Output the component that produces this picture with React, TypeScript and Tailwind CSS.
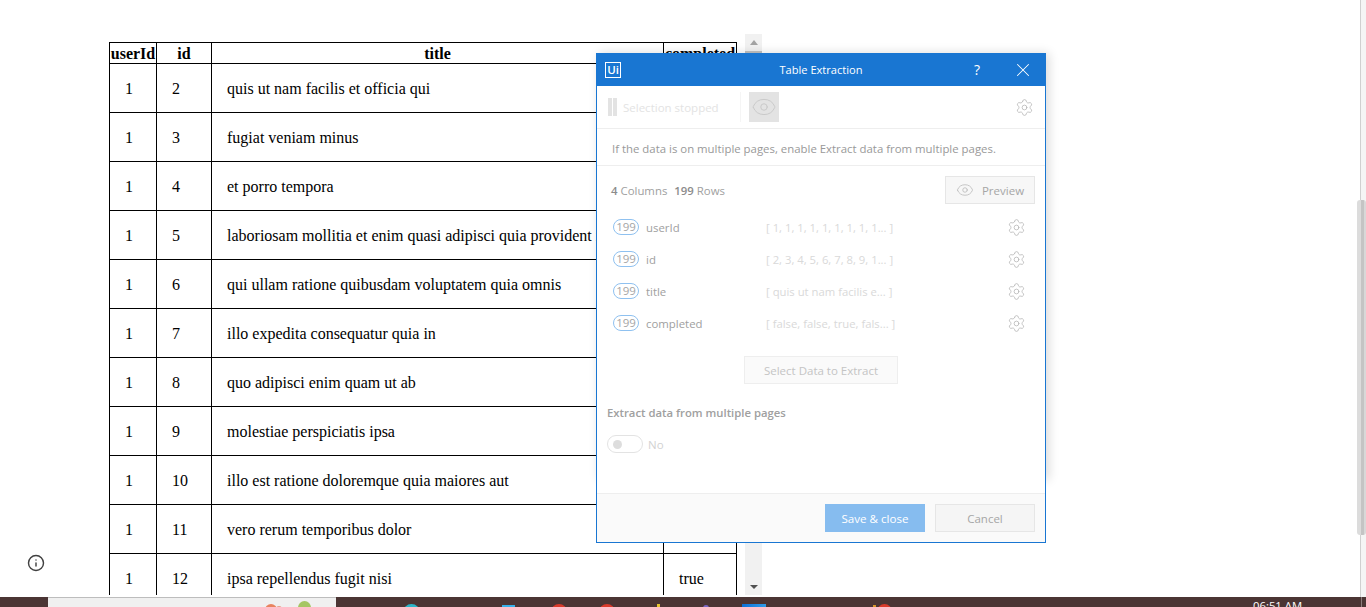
import { Settings, X, Eye, Info } from "lucide-react";

const rows = [
  { id: 2, title: "quis ut nam facilis et officia qui", done: "false" },
  { id: 3, title: "fugiat veniam minus", done: "false" },
  { id: 4, title: "et porro tempora", done: "true" },
  { id: 5, title: "laboriosam mollitia et enim quasi adipisci quia provident illum", done: "false" },
  { id: 6, title: "qui ullam ratione quibusdam voluptatem quia omnis", done: "false" },
  { id: 7, title: "illo expedita consequatur quia in", done: "false" },
  { id: 8, title: "quo adipisci enim quam ut ab", done: "true" },
  { id: 9, title: "molestiae perspiciatis ipsa", done: "false" },
  { id: 10, title: "illo est ratione doloremque quia maiores aut", done: "true" },
  { id: 11, title: "vero rerum temporibus dolor", done: "true" },
  { id: 12, title: "ipsa repellendus fugit nisi", done: "true" },
];

const columns = [
  { name: "userId", sample: "[ 1, 1, 1, 1, 1, 1, 1, 1, 1... ]" },
  { name: "id", sample: "[ 2, 3, 4, 5, 6, 7, 8, 9, 1... ]" },
  { name: "title", sample: "[ quis ut nam facilis e... ]" },
  { name: "completed", sample: "[ false, false, true, fals... ]" },
];

function DataTable() {
  return (
    <div className="absolute left-[109px] top-[42px] h-[553px] w-[628px] overflow-hidden">
      <table className="w-[628px] table-fixed border-collapse border-[1px] border-black font-['Liberation_Serif',serif] text-[16px] text-black">
        <colgroup>
          <col className="w-[47px]" />
          <col className="w-[55px]" />
          <col className="w-[452px]" />
          <col className="w-[73px]" />
        </colgroup>
        <thead>
          <tr className="h-[21px] text-[16px] leading-[18px]">
            <th className="border border-black p-0 pt-[1px] font-bold">userId</th>
            <th className="border border-black p-0 pt-[1px] font-bold">id</th>
            <th className="border border-black p-0 pt-[1px] font-bold">title</th>
            <th className="border border-black p-0 pt-[1px] font-bold">completed</th>
          </tr>
        </thead>
        <tbody>
          {rows.map((row) => (
            <tr key={row.id} className="h-[49px]">
              <td className="border border-black p-0 pl-[15px] pt-[1px]">1</td>
              <td className="border border-black p-0 pl-[15px] pt-[1px]">{row.id}</td>
              <td className="truncate border border-black p-0 pl-[15px] pt-[1px]">{row.title}</td>
              <td className="border border-black p-0 pl-[15px] pt-[1px]">{row.done}</td>
            </tr>
          ))}
        </tbody>
      </table>
    </div>
  );
}

function TableExtraction() {
  return (
    <div className="absolute left-[596px] top-[53px] flex h-[490px] w-[450px] flex-col border border-[#1976d2] bg-white font-['Open_Sans',sans-serif]">
      <div className="relative -mx-px -mt-px flex h-[33px] shrink-0 items-center justify-center bg-[#1976d2] pt-[1px] text-[11.1px] text-white">
        <div className="absolute left-[9px] top-[9px] flex h-[16px] w-[16px] items-center justify-center border border-white text-[11.5px] font-semibold leading-none">
          Ui
        </div>
        <span>Table Extraction</span>
        <span className="absolute left-[378px] top-[8px] text-[14px] leading-[18px]">?</span>
        <X className="absolute left-[416px] top-[6px] h-[22px] w-[22px]" strokeWidth={1.1} />
      </div>

      <div className="flex h-[43px] shrink-0 items-center border-b border-[#eeeeee] pl-[11px] pr-[11px]">
        <span className="h-[18px] w-[4px] bg-[#e3e3e3]" />
        <span className="ml-[1px] h-[18px] w-[4px] bg-[#e3e3e3]" />
        <span className="ml-[6px] w-[116px] pt-[2px] text-[11.5px] text-[#e3e3e3]">Selection stopped</span>
        <span className="ml-[1px] h-[30px] w-px bg-[#f5f5f5]" />
        <div className="ml-[8px] flex h-[30px] w-[30px] items-center justify-center bg-[#e3e3e3]">
          <Eye className="h-[26px] w-[26px] text-[#c9c9c9]" strokeWidth={0.9} />
        </div>
        <Settings className="ml-auto h-[19px] w-[19px] text-[#b5b5b5]" strokeWidth={1} />
      </div>

      <div className="flex h-[37px] shrink-0 items-center border-b border-[#eeeeee] pl-[15px] pt-[3px] text-[11.4px] text-[#999999]">
        If the data is on multiple pages, enable Extract data from multiple pages.
      </div>

      <div className="flex items-center pl-[14px] pr-[10px] pt-[10px]">
        <p className="pt-[2px] text-[11.4px] text-[#a0a0a0]">
          <b className="font-semibold text-[#8c8c8c]">4</b> Columns <b className="ml-[4px] font-semibold text-[#8c8c8c]">199</b> Rows
        </p>
        <button className="ml-auto flex h-[28px] w-[90px] items-center justify-center gap-[8px] border border-[#e6e6e6] bg-[#f7f7f7] text-[11.5px] text-[#a6a6a6]">
          <Eye className="h-[18px] w-[18px] text-[#b5b5b5]" strokeWidth={1} />
          <span className="pt-[2px]">Preview</span>
        </button>
      </div>

      <ul className="mt-[7px] flex flex-col">
        {columns.map((col) => (
          <li key={col.name} className="flex h-[32px] items-center pl-[16px] pr-[19px]">
            <span className="flex h-[16px] w-[26px] items-center justify-center rounded-full border border-[#8fc1f0] text-[11.5px] leading-none text-[#a6a6a6]">
              199
            </span>
            <span className="ml-[7px] w-[120px] pt-[2px] text-[11.4px] text-[#a0a0a0]">{col.name}</span>
            <span className="pt-[2px] text-[11.3px] text-[#d9d9d9]">{col.sample}</span>
            <Settings className="ml-auto h-[19px] w-[19px] text-[#b5b5b5]" strokeWidth={1} />
          </li>
        ))}
      </ul>

      <button className="mx-auto mt-[17px] flex h-[28px] w-[154px] shrink-0 items-center justify-center border border-[#eeeeee] bg-[#fafafa] pt-[1px] text-[11.5px] text-[#c4c4c4]">
        Select Data to Extract
      </button>

      <h3 className="ml-[10px] mt-[21px] text-[11.3px] font-semibold leading-[16px] text-[#a0a0a0]">
        Extract data from multiple pages
      </h3>
      <div className="ml-[10px] mt-[14px] flex items-center">
        <span className="flex h-[18px] w-[36px] items-center rounded-full border border-[#e3e3e3] pl-[5px]">
          <span className="h-[9px] w-[9px] rounded-full bg-[#dddddd]" />
        </span>
        <span className="ml-[5px] pt-[1px] text-[11.5px] text-[#d2d2d2]">No</span>
      </div>

      <div className="mt-auto flex h-[49px] shrink-0 items-center justify-end gap-[10px] border-t border-[#eeeeee] bg-[#fafafa] pr-[10px]">
        <button className="h-[28px] w-[100px] bg-[#86bcef] pt-[2px] text-[11.6px] text-white">Save &amp; close</button>
        <button className="h-[28px] w-[100px] border border-[#e6e6e6] bg-[#f5f5f5] pt-[1px] text-[11.5px] text-[#a6a6a6]">Cancel</button>
      </div>
    </div>
  );
}

function Taskbar() {
  return (
    <div className="absolute inset-x-0 bottom-0 h-[10px] overflow-hidden bg-[#4b3534]">
      <div className="absolute left-[48px] top-0 h-[10px] w-[288px] border-t border-[#bdbdbd] bg-[#f0f0f0]" />
      {/* tops of the pinned icons, the rest falls below the picture */}
      <span className="absolute left-[265px] top-[7px] h-[12px] w-[12px] rounded-full bg-[#e8835f]" />
      <span className="absolute left-[276px] top-[9px] h-[8px] w-[6px] rounded-full bg-[#e8a08a]" />
      <span className="absolute left-[298px] top-[4px] h-[14px] w-[13px] rounded-full bg-[#a5c663]" />
      <span className="absolute left-[403px] top-[7px] h-[17px] w-[17px] rounded-full bg-[#2bb5c9]" />
      <span className="absolute left-[502px] top-[8px] h-[10px] w-[13px] bg-[#35b0ea]" />
      <span className="absolute left-[551px] top-[7px] h-[16px] w-[16px] rounded-full bg-[#d93a2b]" />
      <span className="absolute left-[599px] top-[7px] h-[16px] w-[16px] rounded-full bg-[#d93a2b]" />
      <span className="absolute left-[657px] top-[7px] h-[6px] w-[3px] bg-[#e8c531]" />
      <span className="absolute left-[703px] top-[8px] h-[8px] w-[6px] rounded-full bg-[#7a67c4]" />
      <span className="absolute left-[742px] top-[7px] h-[6px] w-[24px] bg-gradient-to-r from-[#0a6fd6] to-[#2f9be8]" />
      <span className="absolute left-[873px] top-[8px] h-[6px] w-[3px] bg-[#d8962b]" />
      <span className="absolute left-[877px] top-[7px] h-[16px] w-[15px] rounded-full bg-[#d93a2b]" />
      <span className="absolute left-[1253px] top-[2px] font-['Open_Sans',sans-serif] text-[11.3px] leading-[14px] text-white">06:51 AM</span>
      <span className="absolute left-[1361px] top-0 h-[10px] w-px bg-[#8c7c7b]" />
    </div>
  );
}

export default function App() {
  return (
    <div className="relative h-[607px] w-[1366px] overflow-hidden bg-white">
      <DataTable />

      {/* scrollbar of the table frame */}
      <div className="absolute left-[745px] top-[34px] flex h-[561px] w-[17px] flex-col items-center justify-between bg-[#f1f1f1] py-[6px]">
        <span className="h-0 w-0 border-x-[4px] border-b-[5px] border-x-transparent border-b-[#a3a3a3]" />
        <span className="absolute left-0 top-[17px] h-[10px] w-[17px] bg-[#c1c1c1]" />
        <span className="h-0 w-0 border-x-[4px] border-t-[4px] border-x-transparent border-t-[#505050]" />
      </div>

      {/* page scrollbar */}
      <div className="absolute left-[1360px] top-0 h-[597px] w-[6px] border-l border-[#d0d0d0] bg-[#f5f5f5]" />
      <div className="absolute left-[1357px] top-[200px] flex h-[335px] w-[9px] overflow-hidden rounded-t-[3px] rounded-b-[3px]">
        <span className="w-[4px] bg-[#dcdcdc]" />
        <span className="w-[3px] bg-[#c4c4c4]" />
        <span className="w-[2px] bg-[#d8d8d8]" />
      </div>

      <Info className="absolute left-[27px] top-[554px] h-[18px] w-[18px] text-[#404040]" strokeWidth={1.9} />

      {/* soft shadow of the dialog, it stops short of the footer */}
      <div className="absolute left-[596px] top-[53px] h-[427px] w-[450px] shadow-[3px_0_10px_rgba(0,0,0,0.14)]" />
      <TableExtraction />

      <Taskbar />
    </div>
  );
}
